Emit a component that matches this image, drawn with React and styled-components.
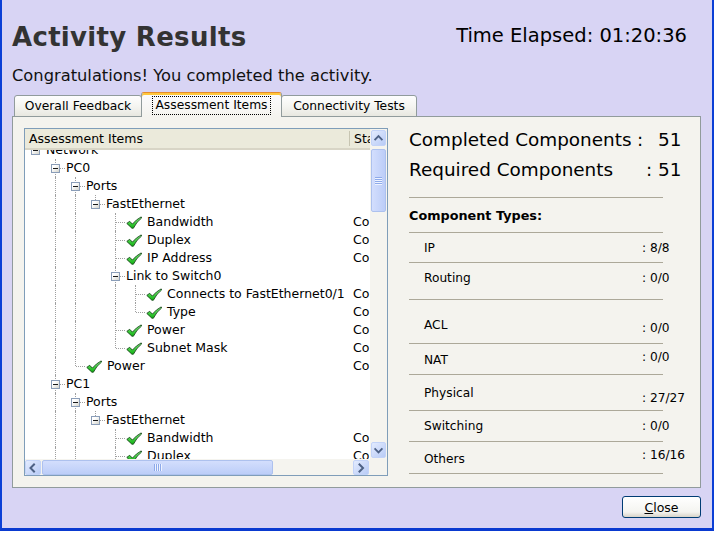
import React from 'react';
import styled, {createGlobalStyle} from 'styled-components';

const GlobalStyle = createGlobalStyle`
  html, body {
    margin: 0;
    padding: 0;
    background: #fff;
  }
  body {
    font-family: 'DejaVu Sans', Verdana, sans-serif;
    color: #000;
  }
`;

const Screen = styled.div`
  width: 714px;
  height: 534px;
  background: #fff;
  overflow: hidden;
`;

const Window = styled.div`
  box-sizing: border-box;
  width: 714px;
  height: 531px;
  display: flex;
  flex-direction: column;
  padding: 0 11px 0 10px;
  background: #d8d4f4;
  border-left: 2px solid #0b3fd6;
  border-right: 2px solid #0b3fd6;
  border-bottom: 3px solid #0a3ad0;
`;

const Header = styled.div`
  display: flex;
  align-items: center;
  justify-content: space-between;
  height: 30px;
  margin-top: 22px;
  padding-right: 14px;
`;

const Title = styled.h1`
  margin: 0;
  font-size: 26px;
  line-height: 30px;
  font-weight: bold;
  letter-spacing: 0.3px;
  color: #333;
`;

const Elapsed = styled.div`
  font-size: 19.5px;
  line-height: 24px;
  margin-top: -2px;
`;

const Congrats = styled.p`
  margin: 14px 0 0;
  font-size: 16.3px;
  line-height: 20px;
  color: #111;
`;

const TabStrip = styled.div`
  position: relative;
  z-index: 1;
  display: flex;
  align-items: flex-end;
  height: 25px;
  margin: 6px 0 -1px 2px;
`;

const Tab = styled.div`
  box-sizing: border-box;
  display: flex;
  align-items: center;
  justify-content: center;
  width: ${(p) => p.$width}px;
  height: ${(p) => (p.$active ? 25 : 22)}px;
  margin-left: -1px;
  font-size: 12.3px;
  border: 1px solid #919b9c;
  border-bottom: ${(p) => (p.$active ? 'none' : '1px solid #919b9c')};
  border-top: ${(p) => (p.$active ? '1px solid #e68b2c' : '1px solid #919b9c')};
  border-radius: 3px 3px 0 0;
  box-shadow: ${(p) => (p.$active ? 'inset 0 2px 0 #ffc73c' : 'none')};
  background: ${(p) => (p.$active
    ? 'linear-gradient(#fcfcfe, #f4f3ee)'
    : 'linear-gradient(#fefefe, #f4f4f0 55%, #e8e7e0)')};

  &:first-child {
    margin-left: 0;
  }
`;

const FocusText = styled.span`
  padding: 1px 2px;
  border: 1px dotted #000;
  line-height: 15px;
  margin-top: 1px;
`;

const Panel = styled.div`
  box-sizing: border-box;
  display: flex;
  gap: 21px;
  height: 372px;
  padding: 11px;
  background: #f4f3ee;
  border: 1px solid #919b9c;
`;

const TreeBox = styled.div`
  box-sizing: border-box;
  flex: none;
  width: 364px;
  height: 348px;
  display: grid;
  grid-template-columns: 345px 17px;
  grid-template-rows: 330px 16px;
  background: #fff;
  border: 1px solid #7f9db9;
`;

const Viewport = styled.div`
  display: flex;
  flex-direction: column;
  overflow: hidden;
`;

const ColumnHeader = styled.div`
  box-sizing: border-box;
  display: flex;
  align-items: center;
  flex: none;
  height: 21px;
  font-size: 12.5px;
  background: #ebeadb;
  border-bottom: 2px solid #d8d5c6;
  white-space: nowrap;
`;

const HeaderCell = styled.div`
  box-sizing: border-box;
  flex: none;
  width: ${(p) => p.$width}px;
  padding-left: ${(p) => p.$pad}px;
  overflow: hidden;
  border-right: ${(p) => (p.$divider ? '1px solid #c7c5b2' : 'none')};
  line-height: 15px;
`;

const Body = styled.div`
  flex: 1;
  overflow: hidden;
`;

const Rows = styled.div`
  margin-top: -9px;
`;

const Row = styled.div`
  display: flex;
  height: 18px;
  font-size: 12.5px;
  white-space: nowrap;
`;

const NameCell = styled.div`
  display: flex;
  align-items: center;
  flex: none;
  width: 325px;
  overflow: hidden;
`;

const StatusCell = styled.div`
  flex: none;
  width: 17px;
  padding-left: 3px;
  overflow: hidden;
  line-height: 18px;
`;

const Guide = styled.span`
  position: relative;
  flex: none;
  width: 20px;
  height: 18px;

  &::before {
    content: '';
    position: absolute;
    left: 10px;
    top: 0;
    height: ${(p) => (p.$kind === 'elbow' ? 9 : 18)}px;
    border-left: 1px dotted #a0a0a0;
    display: ${(p) => (['pass', 'tee', 'elbow'].includes(p.$kind) ? 'block' : 'none')};
  }

  &::after {
    content: '';
    position: absolute;
    left: 11px;
    right: 0;
    top: 9px;
    border-top: 1px dotted #a0a0a0;
    display: ${(p) => (['tee', 'elbow'].includes(p.$kind) ? 'block' : 'none')};
  }
`;

const ExpandBox = styled.span`
  position: absolute;
  z-index: 1;
  left: 6px;
  top: 5px;
  box-sizing: border-box;
  width: 9px;
  height: 9px;
  border: 1px solid #8a9db8;
  background: linear-gradient(135deg, #ffffff 30%, #d4d4cc);

  &::after {
    content: '';
    position: absolute;
    left: 1px;
    top: 3px;
    width: 5px;
    height: 1px;
    background: #1a1a1a;
  }
`;

const NodeLabel = styled.span`
  margin-left: ${(p) => p.$gap}px;
  line-height: 18px;
`;

const CheckWrap = styled.span`
  display: flex;
  flex: none;
  margin-left: 1px;
`;

const VScroll = styled.div`
  display: flex;
  flex-direction: column;
  padding: 1px;
  background: #f5f4ef;
`;

const HScroll = styled.div`
  display: flex;
  padding: 1px 1px 0 0;
  background: #f5f4ef;
`;

const Corner = styled.div`
  background: #f4f3ee;
`;

const ScrollButton = styled.div`
  box-sizing: border-box;
  display: flex;
  align-items: center;
  justify-content: center;
  flex: none;
  width: ${(p) => (p.$vertical ? 15 : 16)}px;
  height: ${(p) => (p.$vertical ? 16 : 15)}px;
  border: 1px solid #c3d3f8;
  border-radius: 2px;
  background: linear-gradient(135deg, #e3ebfe, #b8cbf6);
`;

const Thumb = styled.div`
  box-sizing: border-box;
  display: flex;
  align-items: center;
  justify-content: center;
  flex: none;
  margin: ${(p) => (p.$vertical ? '3px 0 0' : '0 0 0 1px')};
  width: ${(p) => (p.$vertical ? '15px' : '231px')};
  height: ${(p) => (p.$vertical ? '63px' : '15px')};
  border: 1px solid #adc1ee;
  border-radius: 2px;
  background: ${(p) => (p.$vertical
    ? 'linear-gradient(to right, #d3defd, #bccdf8)'
    : 'linear-gradient(#d3defd, #bccdf8)')};
`;

const Grip = styled.span`
  width: ${(p) => (p.$vertical ? 7 : 8)}px;
  height: ${(p) => (p.$vertical ? 8 : 7)}px;
  background: ${(p) => (p.$vertical
    ? 'repeating-linear-gradient(#8eaaea 0 1px, #eef3ff 1px 2px)'
    : 'repeating-linear-gradient(to right, #8eaaea 0 1px, #eef3ff 1px 2px)')};
`;

const Track = styled.div`
  flex: 1;
`;

const Summary = styled.div`
  display: flex;
  flex-direction: column;
  width: 254px;
  flex: none;
`;

const StatRow = styled.div`
  display: grid;
  grid-template-columns: 228px 21px auto;
  height: 24px;
  margin-top: ${(p) => p.$top}px;
  font-size: 18.4px;
  line-height: 24px;
  white-space: nowrap;
`;

const Colon = styled.span`
  margin-left: ${(p) => p.$shift}px;
`;

const TypesList = styled.div`
  margin-top: 15px;
  border-top: 1px solid #aca899;
`;

const TypeRow = styled.div`
  display: grid;
  grid-template-columns: 233px auto;
  align-items: start;
  height: ${(p) => p.$h}px;
  border-bottom: 1px solid #aca899;
  font-size: 12.2px;
  line-height: 16px;
  white-space: nowrap;
`;

const TypesTitle = styled.div`
  padding-top: 10px;
  font-size: 12.8px;
  font-weight: bold;
  line-height: 16px;
`;

const TypeLabel = styled.span`
  padding: ${(p) => p.$top}px 0 0 15px;
`;

const TypeValue = styled.span`
  padding-top: ${(p) => p.$top}px;
`;

const Footer = styled.div`
  display: flex;
  justify-content: flex-end;
  margin-top: 8px;
`;

const CloseButton = styled.button`
  box-sizing: border-box;
  width: 79px;
  height: 22px;
  padding: 0;
  font-family: 'DejaVu Sans', Verdana, sans-serif;
  font-size: 12.5px;
  color: #000;
  border: 1px solid #003c74;
  border-radius: 3px;
  background: linear-gradient(#ffffff, #f4f4f0 75%, #d8d3c8);

  u {
    text-decoration: underline;
  }
`;

const Check = () => (
  <svg width="16" height="13" viewBox="0 0 16 13">
    <defs>
      <linearGradient id="chk" x1="0" y1="0" x2="0" y2="1">
        <stop offset="0" stopColor="#7cf57c" />
        <stop offset="1" stopColor="#0fae0f" />
      </linearGradient>
    </defs>
    <path
      d="M0.8 7.4 L3.7 5.3 L6.4 8.1 Q10 3.6 15.2 0.9 L15.6 2 Q10.6 5.6 7.4 12.2 L5.9 12.2 Z"
      fill="url(#chk)"
      stroke="#17461a"
      strokeWidth="0.9"
      strokeLinejoin="round"
    />
  </svg>
);

const Chevron = ({dir}) => {
  const paths = {
    up: 'M3.5 7.5 L7 4 L10.5 7.5',
    down: 'M3.5 5 L7 8.5 L10.5 5',
    left: 'M8 3.5 L4.5 7 L8 10.5',
    right: 'M5.5 3.5 L9 7 L5.5 10.5',
  };
  return (
    <svg width="14" height="13" viewBox="0 0 14 13">
      <path d={paths[dir]} fill="none" stroke="#4d6185" strokeWidth="2" strokeLinecap="square" />
    </svg>
  );
};

const tree = [
  {label: 'Network', children: [
    {label: 'PC0', children: [
      {label: 'Ports', children: [
        {label: 'FastEthernet', children: [
          {label: 'Bandwidth'},
          {label: 'Duplex'},
          {label: 'IP Address'},
          {label: 'Link to Switch0', children: [
            {label: 'Connects to FastEthernet0/1'},
            {label: 'Type'},
          ]},
          {label: 'Power'},
          {label: 'Subnet Mask'},
        ]},
      ]},
      {label: 'Power'},
    ]},
    {label: 'PC1', children: [
      {label: 'Ports', children: [
        {label: 'FastEthernet', children: [
          {label: 'Bandwidth'},
          {label: 'Duplex'},
          {label: 'IP Address'},
          {label: 'Power'},
        ]},
      ]},
      {label: 'Power'},
    ]},
    {label: 'Switch0', children: [{label: 'Power'}]},
  ]},
];

const flatten = (nodes, depth = 0, open = []) =>
  nodes.flatMap((node, i) => {
    const last = i === nodes.length - 1;
    const row = {label: node.label, depth, last, open, leaf: !node.children};
    const rest = node.children ? flatten(node.children, depth + 1, [...open, !last]) : [];
    return [row, ...rest];
  });

const rows = flatten(tree);

const guideKind = (row, level) => {
  if (level === 0) {
    return 'none';
  }
  if (level < row.depth) {
    return row.open[level] ? 'pass' : 'none';
  }
  return row.last ? 'elbow' : 'tee';
};

const TreeRow = ({row}) => (
  <Row>
    <NameCell>
      {Array.from({length: row.depth + 1}, (_, level) => (
        <Guide key={level} $kind={guideKind(row, level)}>
          {level === row.depth && !row.leaf && <ExpandBox />}
        </Guide>
      ))}
      {row.leaf && <CheckWrap><Check /></CheckWrap>}
      <NodeLabel $gap={row.leaf ? 5 : 1}>{row.label}</NodeLabel>
    </NameCell>
    <StatusCell>{row.leaf ? 'Complete' : ''}</StatusCell>
  </Row>
);

const types = [
  {label: 'IP', value: ': 8/8', h: 29, top: 7, valueTop: 7},
  {label: 'Routing', value: ': 0/0', h: 36, top: 7, valueTop: 7},
  {label: 'ACL', value: ': 0/0', h: 43, top: 17, valueTop: 20},
  {label: 'NAT', value: ': 0/0', h: 30, top: 8, valueTop: 5},
  {label: 'Physical', value: ': 27/27', h: 35, top: 10, valueTop: 15},
  {label: 'Switching', value: ': 0/0', h: 30, top: 7, valueTop: 7},
  {label: 'Others', value: ': 16/16', h: 31, top: 9, valueTop: 5},
];

const App = () => (
  <Screen>
    <GlobalStyle />
    <Window>
      <Header>
        <Title>Activity Results</Title>
        <Elapsed>Time Elapsed: 01:20:36</Elapsed>
      </Header>
      <Congrats>Congratulations! You completed the activity.</Congrats>

      <TabStrip>
        <Tab $width={128}>Overall Feedback</Tab>
        <Tab $width={141} $active>
          <FocusText>Assessment Items</FocusText>
        </Tab>
        <Tab $width={136}>Connectivity Tests</Tab>
      </TabStrip>

      <Panel>
        <TreeBox>
          <Viewport>
            <ColumnHeader>
              <HeaderCell $width={325} $pad={4} $divider>Assessment Items</HeaderCell>
              <HeaderCell $width={20} $pad={4}>Status</HeaderCell>
            </ColumnHeader>
            <Body>
              <Rows>
                {rows.map((row, i) => <TreeRow key={i} row={row} />)}
              </Rows>
            </Body>
          </Viewport>
          <VScroll>
            <ScrollButton $vertical><Chevron dir="up" /></ScrollButton>
            <Thumb $vertical><Grip $vertical /></Thumb>
            <Track />
            <ScrollButton $vertical><Chevron dir="down" /></ScrollButton>
          </VScroll>
          <HScroll>
            <ScrollButton><Chevron dir="left" /></ScrollButton>
            <Thumb><Grip /></Thumb>
            <Track />
            <ScrollButton><Chevron dir="right" /></ScrollButton>
          </HScroll>
          <Corner />
        </TreeBox>

        <Summary>
          <StatRow $top={0}>
            <span>Completed Components</span>
            <Colon $shift={0}>:</Colon>
            <span>51</span>
          </StatRow>
          <StatRow $top={6}>
            <span>Required Components</span>
            <Colon $shift={9}>:</Colon>
            <span>51</span>
          </StatRow>
          <TypesList>
            <TypeRow $h={34}>
              <TypesTitle>Component Types:</TypesTitle>
            </TypeRow>
            {types.map((t) => (
              <TypeRow key={t.label} $h={t.h}>
                <TypeLabel $top={t.top}>{t.label}</TypeLabel>
                <TypeValue $top={t.valueTop}>{t.value}</TypeValue>
              </TypeRow>
            ))}
          </TypesList>
        </Summary>
      </Panel>

      <Footer>
        <CloseButton><u>C</u>lose</CloseButton>
      </Footer>
    </Window>
  </Screen>
);

export default App;
